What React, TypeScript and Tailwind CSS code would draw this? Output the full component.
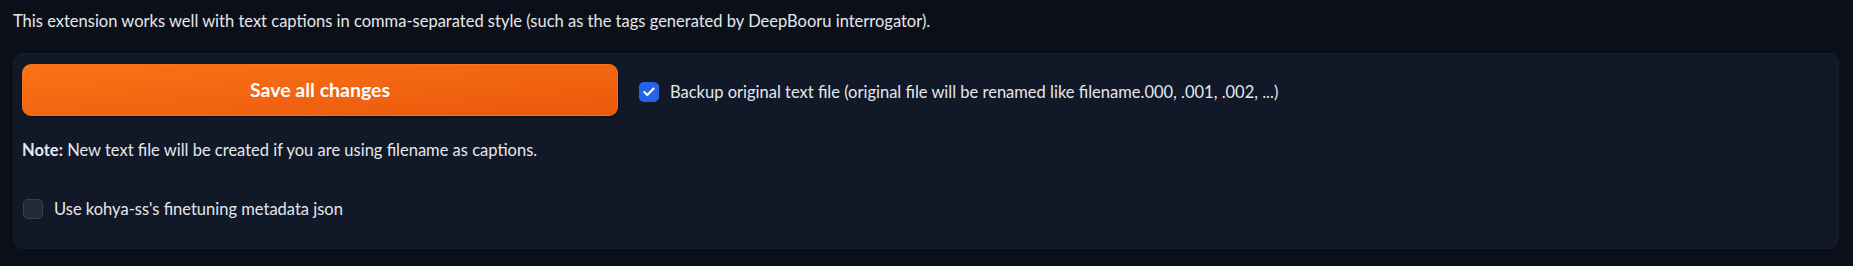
import { Check } from "lucide-react";

const font = { fontFamily: '"Lato", "Noto Sans", sans-serif' };

function Checkbox({ checked, label }: { checked: boolean; label: string }) {
  return (
    <label className="flex items-center gap-[11px] text-[16.5px] text-[#e5e7eb]">
      {checked ? (
        <span className="flex h-[20px] w-[20px] items-center justify-center rounded-[5px] bg-[#2563eb]">
          <Check className="h-[14px] w-[14px] text-white" strokeWidth={3.5} />
        </span>
      ) : (
        <span className="h-[20px] w-[20px] rounded-[5px] border border-[#374151] bg-[#1f2937]" />
      )}
      <span>{label}</span>
    </label>
  );
}

export default function App() {
  return (
    <div className="h-[266px] w-full bg-[#0b0f19] pt-[9px] text-[#e5e7eb]" style={font}>
      <p className="pl-[13px] text-[16.5px] leading-[24px]">
        This extension works well with text captions in comma-separated style (such as the tags generated by DeepBooru interrogator).
      </p>
      <div className="ml-[13px] mr-[14px] mt-[20px] flex h-[196px] gap-[21px] rounded-[10px] border border-[#171d2b] bg-[#111827] pl-[8px] pt-[10px]">
        <div className="flex w-[596px] flex-col">
          <button className="h-[52px] w-full rounded-[9px] border border-[#f97316] bg-gradient-to-br from-[#f97316] to-[#ea580c] text-[19.5px] font-bold text-white shadow-[0_1px_2px_rgba(0,0,0,0.4)]">
            Save all changes
          </button>
          <p className="mt-[22px] text-[16.5px] leading-[24px]">
            <b className="font-bold">Note:</b> New text file will be created if you are using filename as captions.
          </p>
          <div className="mt-[35px] pl-[1px]">
            <Checkbox checked={false} label="Use kohya-ss's finetuning metadata json" />
          </div>
        </div>
        <div className="pt-[16px]">
          <Checkbox checked label="Backup original text file (original file will be renamed like filename.000, .001, .002, ...)" />
        </div>
      </div>
    </div>
  );
}
